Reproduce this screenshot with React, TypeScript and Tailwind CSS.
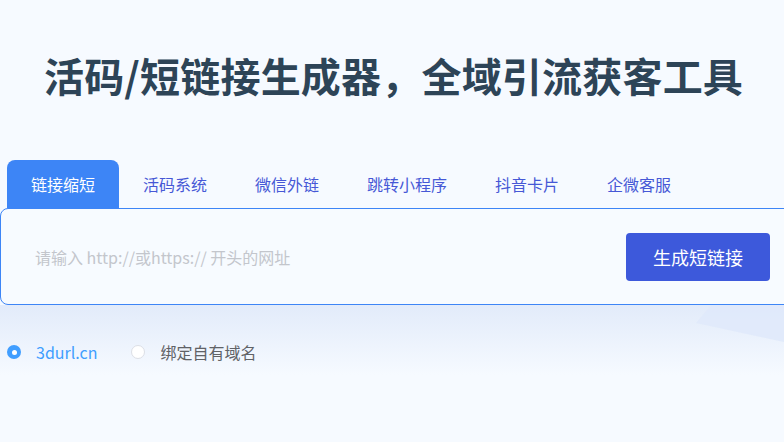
import { useState } from 'react'

const tabs = ['链接缩短', '活码系统', '微信外链', '跳转小程序', '抖音卡片', '企微客服']

const domains = [
  { value: 'default', label: '3durl.cn' },
  { value: 'custom', label: '绑定自有域名' },
]

export default function App() {
  const [active, setActive] = useState(0)
  const [domain, setDomain] = useState('default')
  const [url, setUrl] = useState('')

  return (
    <div
      className="relative min-h-[442px] overflow-hidden bg-[#f6faff]"
      style={{ fontFamily: '"Noto Sans CJK SC", "Noto Sans", sans-serif' }}
    >
      {/* soft background decoration */}
      <div className="pointer-events-none absolute left-0 top-[305px] h-[70px] w-full bg-gradient-to-b from-[#e2ebfa] to-[#f6faff]" />
      <svg
        className="pointer-events-none absolute left-[600px] top-[200px]"
        width="184"
        height="160"
        viewBox="0 0 184 160"
      >
        <polygon points="96,123 184,20 184,142" fill="#dfe9fa" opacity="0.85" />
      </svg>

      <div className="relative">
        <h1 className="pt-[47px] pl-[3px] text-center text-[40px] font-bold leading-[56px] tracking-[0.2px] text-[#2d4457]">
          活码/短链接生成器，全域引流获客工具
        </h1>

        <div className="mt-[57px] flex pl-[7px]">
          {tabs.map((tab, i) => (
            <button
              key={tab}
              type="button"
              onClick={() => setActive(i)}
              className={
                i === active
                  ? 'h-[48px] rounded-t-lg bg-[#3d85f6] px-6 text-[16px] text-white'
                  : 'h-[48px] px-6 text-[16px] text-[#4658d6]'
              }
            >
              {tab}
            </button>
          ))}
        </div>

        <div className="flex h-[97px] w-[800px] items-center rounded-lg border border-[#3d85f6] bg-[#f7fbff]">
          <input
            value={url}
            onChange={(e) => setUrl(e.target.value)}
            placeholder="请输入 http://或https:// 开头的网址"
            className="h-full flex-1 bg-transparent pl-[34px] text-[16px] text-[#303133] outline-none placeholder:text-[#c3c6cc]"
          />
          <button
            type="button"
            className="mr-[29px] mt-px h-[48px] w-[144px] rounded bg-[#3d59db] text-[18px] text-white"
          >
            生成短链接
          </button>
        </div>

        <div className="mt-[35px] flex items-center pl-[7px]">
          {domains.map((d) => {
            const checked = domain === d.value
            return (
              <label
                key={d.value}
                className="mr-[34px] flex cursor-pointer items-center"
                onClick={() => setDomain(d.value)}
              >
                <span
                  className={
                    checked
                      ? 'flex h-[14px] w-[14px] items-center justify-center rounded-full bg-[#409eff]'
                      : 'h-[14px] w-[14px] rounded-full border border-[#dcdfe6] bg-white'
                  }
                >
                  {checked && <span className="h-[5px] w-[5px] rounded-full bg-white" />}
                </span>
                <span
                  className={
                    checked
                      ? 'ml-[15px] text-[16px] text-[#409eff]'
                      : 'ml-[15px] text-[16px] text-[#606266]'
                  }
                >
                  {d.label}
                </span>
              </label>
            )
          })}
        </div>
      </div>
    </div>
  )
}
